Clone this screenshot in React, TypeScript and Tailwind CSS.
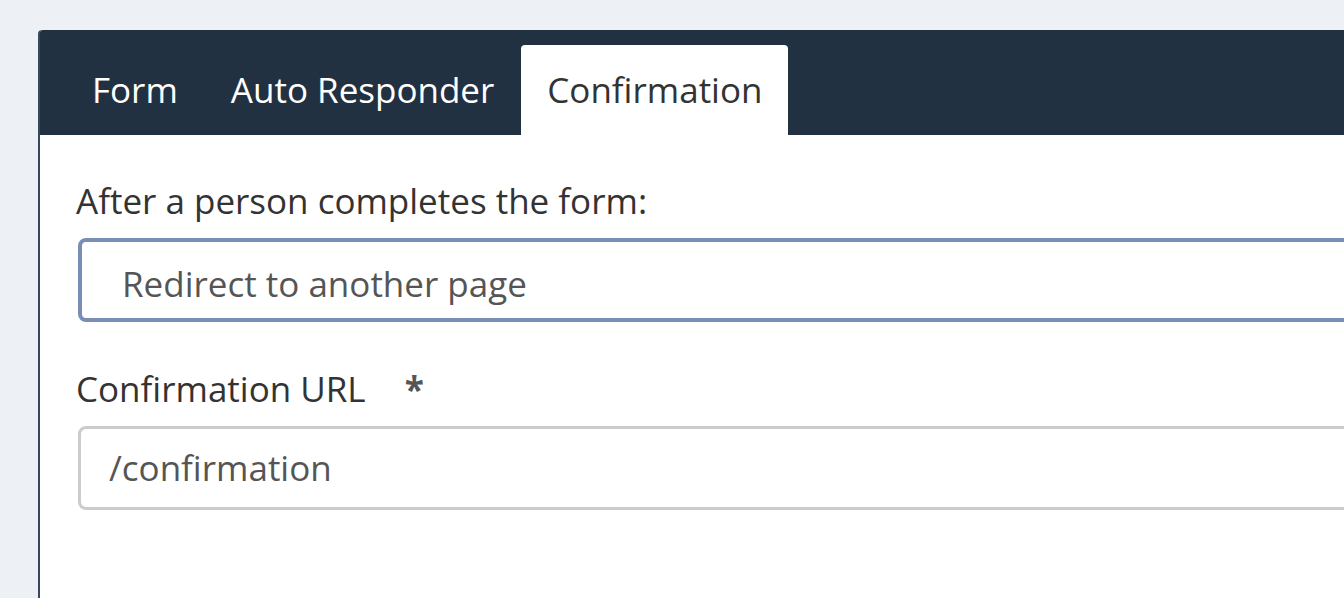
import React from "react";

export default function App() {
  return (
    <div className="w-[1344px] h-[598px] overflow-hidden bg-[#edf0f4] pt-[30px] pl-[38px]" style={{ fontFamily: '"Open Sans", sans-serif' }}>
      <div className="w-[1400px] h-[600px] bg-white rounded-tl-[4px] border-l-2 border-[#34495e] flex flex-col">
        <div className="h-[105px] bg-[#223142] flex items-end pl-[26px] gap-[1px] rounded-tl-[3px]">
          <div className="h-[90px] px-[26px] flex items-center text-[35px] text-white">Form</div>
          <div className="h-[90px] px-[26px] flex items-center text-[35px] text-white">Auto Responder</div>
          <div className="h-[90px] px-[26px] flex items-center text-[35px] text-[#333] bg-white rounded-t-[4px]">Confirmation</div>
        </div>
        <div className="pl-[38px] pt-[44px] flex flex-col">
          <label className="-ml-[2px] text-[35px] leading-[44px] text-[#333]">After a person completes the form:</label>
          <div className="mt-[15px] h-[84px] border-4 border-[#7a8db5] rounded-[8px] flex items-center pl-[40px] pt-[8px] text-[35px] text-[#555]">
            Redirect to another page
          </div>
          <div className="-ml-[2px] mt-[45px] flex items-center text-[35px] leading-[44px] text-[#333]">
            <span>Confirmation URL</span>
            <span className="ml-[39px] font-bold text-[#555]">*</span>
          </div>
          <div className="mt-[15px] h-[84px] border-[3px] border-[#ccc] rounded-[8px] flex items-center pl-[28px] text-[35px] text-[#555]">
            /confirmation
          </div>
        </div>
      </div>
    </div>
  );
}
